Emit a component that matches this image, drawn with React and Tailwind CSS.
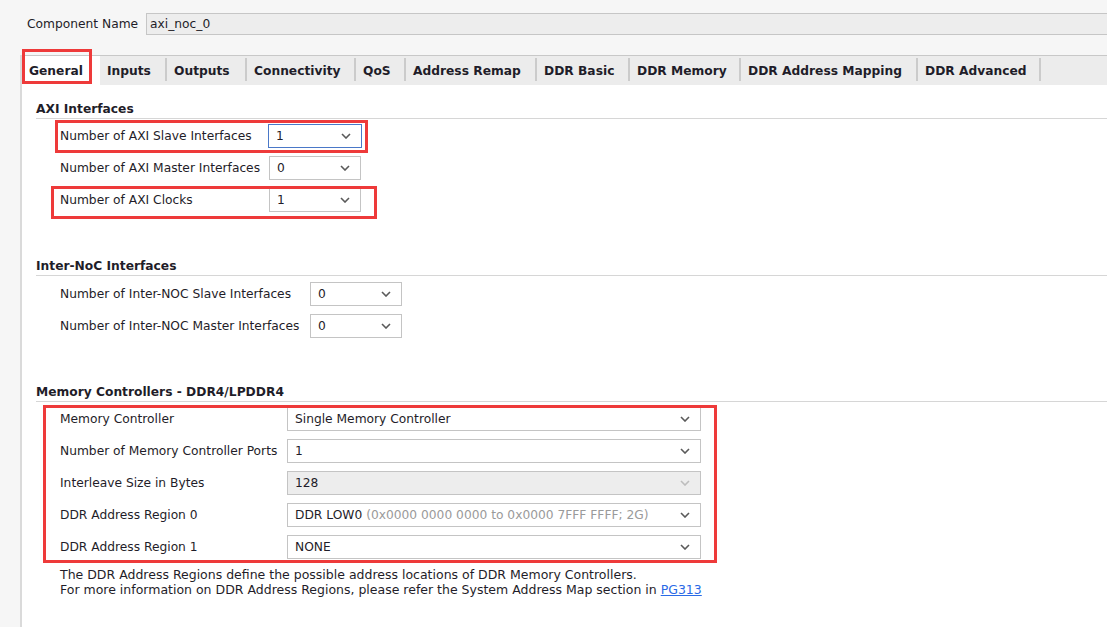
import React from "react";

const tabs = [
  { name: "General", w: 78, active: true },
  { name: "Inputs", w: 67 },
  { name: "Outputs", w: 80 },
  { name: "Connectivity", w: 109 },
  { name: "QoS", w: 50 },
  { name: "Address Remap", w: 131 },
  { name: "DDR Basic", w: 93 },
  { name: "DDR Memory", w: 111 },
  { name: "DDR Address Mapping", w: 177 },
  { name: "DDR Advanced", w: 123 },
];

function Chevron({ muted }) {
  return (
    <svg width="10" height="6" viewBox="0 0 10 6" className="shrink-0">
      <polyline
        points="1,1 5,5 9,1"
        fill="none"
        stroke={muted ? "#bdbdbd" : "#5a5a5a"}
        strokeWidth="1.6"
      />
    </svg>
  );
}

function Combo({ width, children, focused, disabled }) {
  return (
    <div
      className={
        "h-[24px] flex items-center justify-between pl-[7px] pr-[10px] border " +
        (focused ? "border-[#4a78c8] " : "border-[#c4c4c4] ") +
        (disabled ? "bg-[#ededed]" : "bg-white")
      }
      style={{ width }}
    >
      <span className="truncate pt-[1px]">{children}</span>
      <Chevron muted={disabled} />
    </div>
  );
}

function Row({ label, labelW, comboW, value, focused, disabled, mark }) {
  return (
    <div className="relative flex items-center w-fit">
      <span className="pt-[1px]" style={{ width: labelW }}>{label}</span>
      <Combo width={comboW} focused={focused} disabled={disabled}>
        {value}
      </Combo>
      {mark}
    </div>
  );
}

function Header({ children, top }) {
  return (
    <div
      className="ml-[14px] pt-[1px] pb-[1px] leading-[16px] font-bold border-b border-[#d6d6d6]"
      style={{ marginTop: top }}
    >
      {children}
    </div>
  );
}

export default function App() {
  return (
    <div
      className="w-full h-[627px] overflow-hidden bg-[#f6f6f6] text-[12.25px] text-[#1f1d29] flex flex-col"
      style={{ fontFamily: '"DejaVu Sans", Verdana, sans-serif' }}
    >
      {/* component name */}
      <div className="flex items-center pl-[27px] mt-[13px] h-[22px]">
        <span className="w-[119px]">Component Name</span>
        <div className="flex-1 h-[22px] flex items-center pl-[3px] bg-[#ededed] border-y border-l border-[#c6c6c6]">
          axi_noc_0
        </div>
      </div>

      {/* tab frame */}
      <div className="mt-[20px] ml-[20px] flex-1 flex flex-col border-l-2 border-[#dadada]">
        <div className="flex h-[30px] bg-[#ececec] border-t border-[#c8c8c8]">
          {tabs.map((t) => (
            <div
              key={t.name}
              className={
                "relative flex justify-between font-bold " +
                (t.active ? "bg-white" : "")
              }
              style={{ width: t.w }}
            >
              <span className="pl-[7px] pt-[2px] self-center">{t.name}</span>
              {!t.active && (
                <span className="w-[2px] h-[23px] mt-[2px] bg-[#cbcbcb]" />
              )}
              {t.active && (
                <span className="absolute left-0 top-[-7px] w-[70px] h-[35px] border-[3px] border-[#ee3a3a]" />
              )}
            </div>
          ))}
        </div>

        <div className="flex-1 bg-white flex flex-col">
          <Header top={15}>AXI Interfaces</Header>
          <div className="ml-[38px] mt-[5px] flex flex-col gap-[8px]">
            <Row
              label="Number of AXI Slave Interfaces"
              labelW={208}
              comboW={94}
              value="1"
              focused
              mark={
                <span className="absolute left-[-5px] right-[-6px] top-[-4px] bottom-[-5px] border-[3px] border-[#ee3a3a]" />
              }
            />
            <Row
              label="Number of AXI Master Interfaces"
              labelW={209}
              comboW={92}
              value="0"
            />
            <Row
              label="Number of AXI Clocks"
              labelW={209}
              comboW={92}
              value="1"
              mark={
                <span className="absolute left-[-9px] right-[-16px] top-[-2px] bottom-[-7px] border-[3px] border-[#ee3a3a]" />
              }
            />
          </div>

          <Header top={45}>Inter-NoC Interfaces</Header>
          <div className="ml-[38px] mt-[6px] flex flex-col gap-[8px]">
            <Row
              label="Number of Inter-NOC Slave Interfaces"
              labelW={250}
              comboW={92}
              value="0"
            />
            <Row
              label="Number of Inter-NOC Master Interfaces"
              labelW={250}
              comboW={92}
              value="0"
            />
          </div>

          <Header top={45}>Memory Controllers - DDR4/LPDDR4</Header>
          <div className="relative w-fit ml-[38px] mt-[5px] flex flex-col gap-[8px]">
            <Row
              label="Memory Controller"
              labelW={227}
              comboW={414}
              value="Single Memory Controller"
            />
            <Row
              label="Number of Memory Controller Ports"
              labelW={227}
              comboW={414}
              value="1"
            />
            <Row
              label="Interleave Size in Bytes"
              labelW={227}
              comboW={414}
              value="128"
              disabled
            />
            <Row
              label="DDR Address Region 0"
              labelW={227}
              comboW={414}
              value={
                <>
                  DDR LOW0{" "}
                  <span className="text-[#9a9a9a]">
                    (0x0000 0000 0000 to 0x0000 7FFF FFFF; 2G)
                  </span>
                </>
              }
            />
            <Row
              label="DDR Address Region 1"
              labelW={227}
              comboW={414}
              value="NONE"
            />
            <span className="absolute left-[-17px] right-[-16px] top-[-2px] bottom-[-4px] border-[3px] border-[#ee3a3a]" />
          </div>

          <div className="ml-[38px] mt-[8px] leading-[15px] text-[12.5px]">
            <p>The DDR Address Regions define the possible address locations of DDR Memory Controllers.</p>
            <p>
              For more information on DDR Address Regions, please refer the System Address Map section in{" "}
              <span className="text-[#2a6ae6] underline">PG313</span>
            </p>
          </div>
        </div>
      </div>
    </div>
  );
}
